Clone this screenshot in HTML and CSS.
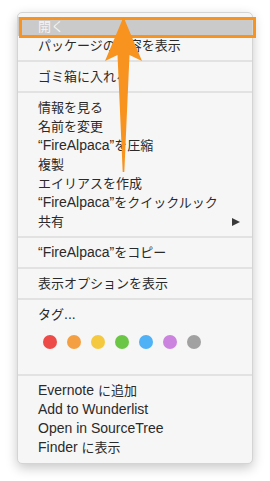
FILE: index.html
```html
<!DOCTYPE html>
<html lang="ja">
<head>
<meta charset="utf-8">
<link rel="stylesheet" href="styles.css">
</head>
<body>
<div class="menu">
  <div class="item active">開く</div>
  <div class="item">パッケージの内容を表示</div>
  <div class="sep"></div>
  <div class="item">ゴミ箱に入れる</div>
  <div class="sep"></div>
  <div class="item">情報を見る</div>
  <div class="item">名前を変更</div>
  <div class="item"><span class="en">“FireAlpaca”</span>を圧縮</div>
  <div class="item">複製</div>
  <div class="item">エイリアスを作成</div>
  <div class="item"><span class="en">“FireAlpaca”</span>をクイックルック</div>
  <div class="item sub"><span>共有</span><span class="tri"></span></div>
  <div class="sep"></div>
  <div class="item"><span class="en">“FireAlpaca”</span>をコピー</div>
  <div class="sep"></div>
  <div class="item">表示オプションを表示</div>
  <div class="sep"></div>
  <div class="item">タグ<span class="en">...</span></div>
  <div class="dots">
    <span class="dot red"></span>
    <span class="dot orange"></span>
    <span class="dot yellow"></span>
    <span class="dot green"></span>
    <span class="dot blue"></span>
    <span class="dot purple"></span>
    <span class="dot grey"></span>
  </div>
  <div class="sep"></div>
  <div class="item"><span class="en">Evernote </span>に追加</div>
  <div class="item"><span class="en">Add to Wunderlist</span></div>
  <div class="item"><span class="en">Open in SourceTree</span></div>
  <div class="item"><span class="en">Finder </span>に表示</div>
</div>
<svg class="annot" width="270" height="481" viewBox="0 0 270 481">
  <rect x="20.5" y="18.5" width="234" height="18" fill="none" stroke="#f7931e" stroke-width="3"/>
  <path d="M123.5 17 L142 61 L129.5 55 L124.3 172 L122.7 172 L117.5 55 L105 61 Z" fill="#f7931e"/>
</svg>
</body>
</html>
```
FILE: styles.css
```css
html, body {
  margin: 0;
  padding: 0;
  background: #ffffff;
}
body {
  position: relative;
  width: 270px;
  height: 481px;
  overflow: hidden;
  font-family: "Liberation Sans", "Noto Sans CJK JP", sans-serif;
  font-size: 13px;
  color: #2a2a2a;
}
.menu {
  margin: 12px 0 0 17px;
  width: 234px;
  height: 446px;
  box-sizing: content-box;
  padding: 4px 0 0 0;
  background: #f6f6f6;
  border: 1px solid #d4d4d4;
  border-radius: 5px;
  box-shadow: 0 4px 12px rgba(0, 0, 0, 0.22);
  overflow: hidden;
}
.item {
  height: 19px;
  line-height: 19px;
  padding: 0 12px 0 20px;
  white-space: nowrap;
}
.en {
  font-size: 14px;
}
.item.active {
  background: #cacaca;
  color: #f4f4f4;
}
.sub {
  display: flex;
  justify-content: space-between;
  align-items: center;
}
.tri {
  width: 0;
  height: 0;
  border-left: 8px solid #3a3a3a;
  border-top: 4.5px solid transparent;
  border-bottom: 4.5px solid transparent;
}
.sep {
  height: 2px;
  margin: 5px 0;
  background: #e2e2e2;
}
.dots {
  height: 45px;
  box-sizing: border-box;
  padding: 11px 0 0 25px;
  display: flex;
  gap: 10px;
  align-items: flex-start;
}
.dot {
  width: 14px;
  height: 14px;
  border-radius: 50%;
}
.red { background: #ec4b47; }
.orange { background: #f4a042; }
.yellow { background: #f5c93f; }
.green { background: #6cc645; }
.blue { background: #4fb1f6; }
.purple { background: #cc83df; }
.grey { background: #a1a1a1; }
.annot {
  position: absolute;
  left: 0;
  top: 0;
  pointer-events: none;
}
```
